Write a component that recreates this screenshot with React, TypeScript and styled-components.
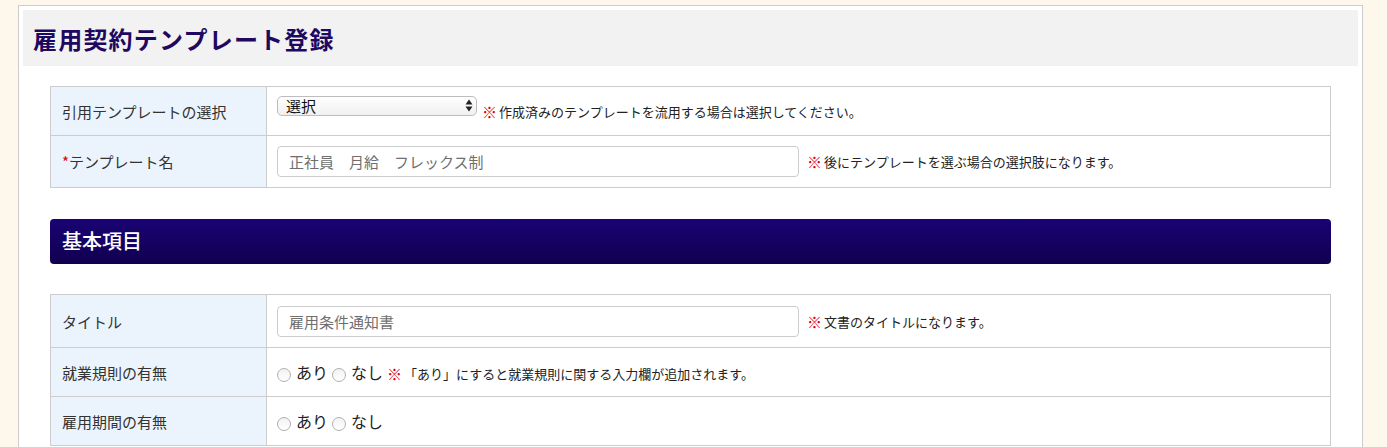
import React from "react";
import styled, {createGlobalStyle} from "styled-components";

const GlobalStyle = createGlobalStyle`
  html, body {
    margin: 0;
    padding: 0;
    background: #fdf7ec;
    font-family: "Noto Sans CJK JP", "Liberation Sans", sans-serif;
    color: #333;
  }
`;

const Panel = styled.div`
  box-sizing: border-box;
  width: 1345px;
  margin: 5px 0 0 18px;
  padding: 4px 4px 0 4px;
  background: #fff;
  border: 1px solid #cccccc;
  border-bottom: none;
  height: 442px;
`;

const PageHeader = styled.div`
  height: 56px;
  background: #f2f2f2;
  display: flex;
  align-items: center;
  padding-left: 10px;
`;

const PageTitle = styled.h1`
  margin: 0;
  font-size: 24px;
  font-weight: 700;
  color: #1e0860;
  letter-spacing: 1.2px;
`;

const Content = styled.div`
  padding: 20px 27px 0 27px;
`;

const FormTable = styled.table<{$gap?: number}>`
  width: 100%;
  border-collapse: collapse;
  margin-top: ${p => p.$gap ?? 0}px;
`;

const Row = styled.tr<{$h: number}>`
  height: ${p => p.$h}px;
`;

const Label = styled.th`
  width: 216px;
  box-sizing: border-box;
  background: #ebf4fd;
  border: 1px solid #cccccc;
  text-align: left;
  font-weight: 400;
  font-size: 15px;
  color: #333;
  padding: 0 0 0 11px;
`;

const Field = styled.td`
  border: 1px solid #cccccc;
  padding: 0 0 0 10px;
  font-size: 15px;
`;

const Line = styled.div`
  display: flex;
  align-items: center;
`;

const Required = styled.span`
  color: #e00000;
`;

const SelectWrap = styled.div`
  position: relative;
  width: 200px;
  height: 20px;
  margin-top: -12px;
`;

const Select = styled.select`
  appearance: none;
  box-sizing: border-box;
  width: 100%;
  height: 100%;
  border: 1px solid #bdbdbd;
  border-radius: 5px;
  background: linear-gradient(#ffffff, #f0f0f0);
  font-family: inherit;
  font-size: 15px;
  color: #111;
  padding: 0 0 0 8px;
  line-height: 18px;
  overflow: hidden;
`;

const Arrows = styled.svg`
  position: absolute;
  right: 4px;
  top: 4px;
  pointer-events: none;
`;

const TextInput = styled.input`
  box-sizing: border-box;
  width: 522px;
  height: 31px;
  border: 1px solid #cccccc;
  border-radius: 4px;
  padding: 0 11px;
  font-family: inherit;
  font-size: 15px;
  color: #333;
  &::placeholder {
    color: #6f6f6f;
  }
`;

const Note = styled.span<{$offset?: number; $drop?: number}>`
  font-size: 13px;
  color: #222;
  margin-left: ${p => p.$offset ?? 8}px;
  margin-top: ${p => p.$drop ?? 0}px;
  white-space: nowrap;
`;

const Mark = styled.span`
  color: #e00000;
  font-weight: 900;
  font-size: 15px;
  margin-right: 2px;
  vertical-align: -1px;
`;

const SectionBar = styled.div`
  margin-top: 31px;
  height: 45px;
  border-radius: 4px;
  background: linear-gradient(#190374, #11004f);
  display: flex;
  align-items: center;
  padding-left: 12px;
`;

const SectionTitle = styled.h2`
  margin: 0 0 2px 0;
  color: #fff;
  font-size: 20px;
  font-weight: 500;
`;

const RadioGroup = styled.label`
  display: inline-flex;
  align-items: center;
  font-size: 16px;
  color: #222;
  margin-right: 4px;
`;

const Radio = styled.input`
  appearance: none;
  width: 14px;
  height: 14px;
  margin: 6px 5px 0 0;
  border: 1px solid #b0b0b0;
  border-radius: 50%;
  background: linear-gradient(#f2f2f2, #ffffff);
`;

const YesNo = ({name}: {name: string}) => (
    <>
        <RadioGroup><Radio type="radio" name={name}/>あり</RadioGroup>
        <RadioGroup><Radio type="radio" name={name}/>なし</RadioGroup>
    </>
);

export default function App() {
    return (
        <>
            <GlobalStyle/>
            <Panel>
                <PageHeader>
                    <PageTitle>雇用契約テンプレート登録</PageTitle>
                </PageHeader>
                <Content>
                    <FormTable>
                        <tbody>
                        <Row $h={49}>
                            <Label>引用テンプレートの選択</Label>
                            <Field>
                                <Line>
                                    <SelectWrap>
                                        <Select defaultValue="">
                                            <option value="">選択</option>
                                        </Select>
                                        <Arrows width="8" height="13" viewBox="0 0 8 13">
                                            <path d="M4 0.5 L7.5 5.5 L0.5 5.5 Z" fill="#222"/>
                                            <path d="M4 12.5 L7.5 7.5 L0.5 7.5 Z" fill="#222"/>
                                        </Arrows>
                                    </SelectWrap>
                                    <Note $offset={5}><Mark>※</Mark>作成済みのテンプレートを流用する場合は選択してください。</Note>
                                </Line>
                            </Field>
                        </Row>
                        <Row $h={52}>
                            <Label><Required>*</Required>テンプレート名</Label>
                            <Field>
                                <Line>
                                    <TextInput placeholder="正社員　月給　フレックス制"/>
                                    <Note><Mark>※</Mark>後にテンプレートを選ぶ場合の選択肢になります。</Note>
                                </Line>
                            </Field>
                        </Row>
                        </tbody>
                    </FormTable>

                    <SectionBar>
                        <SectionTitle>基本項目</SectionTitle>
                    </SectionBar>

                    <FormTable $gap={30}>
                        <tbody>
                        <Row $h={53}>
                            <Label>タイトル</Label>
                            <Field>
                                <Line>
                                    <TextInput placeholder="雇用条件通知書"/>
                                    <Note><Mark>※</Mark>文書のタイトルになります。</Note>
                                </Line>
                            </Field>
                        </Row>
                        <Row $h={49}>
                            <Label>就業規則の有無</Label>
                            <Field>
                                <Line>
                                    <YesNo name="rules"/>
                                    <Note $offset={0} $drop={2}><Mark>※</Mark>「あり」にすると就業規則に関する入力欄が追加されます。</Note>
                                </Line>
                            </Field>
                        </Row>
                        <Row $h={49}>
                            <Label>雇用期間の有無</Label>
                            <Field>
                                <Line>
                                    <YesNo name="period"/>
                                </Line>
                            </Field>
                        </Row>
                        </tbody>
                    </FormTable>
                </Content>
            </Panel>
        </>
    );
}
